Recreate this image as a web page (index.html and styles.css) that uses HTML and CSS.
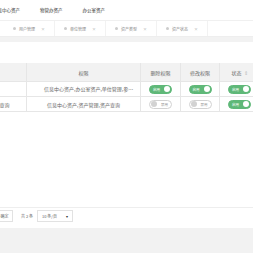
FILE: index.html
```html
<!DOCTYPE html>
<html>
<head>
    <link rel="stylesheet" href="styles.css">
</head>
<body>
    <div class="header">
        <div class="nav-item">信息中心资产</div>
        <div class="nav-item">物管办资产</div>
        <div class="nav-item">办公室资产</div>
    </div>

    <div class="tabs">
        <div class="tab"><span class="dot"></span>用户管理<span class="close">×</span></div>
        <div class="tab"><span class="dot"></span>单位管理<span class="close">×</span></div>
        <div class="tab"><span class="dot"></span>资产类型<span class="close">×</span></div>
        <div class="tab"><span class="dot"></span>资产状态<span class="close">×</span></div>
    </div>

    <div class="main">
        <div class="card">
            <div class="toolbar"></div>
            <div class="table">
                <div class="th"></div>
                <div class="th">权限</div>
                <div class="th">删除权限</div>
                <div class="th">修改权限</div>
                <div class="th">状态 <span class="sort">⇕</span></div>

                <div class="td"></div>
                <div class="td ellipsis">信息中心资产,办公室资产,单位管理,参数设置,资产管理</div>
                <div class="td"><span class="switch on"><em>启用</em><i></i></span></div>
                <div class="td"><span class="switch on"><em>启用</em><i></i></span></div>
                <div class="td"><span class="switch on"><em>启用</em><i></i></span></div>

                <div class="td">资产查询</div>
                <div class="td">信息中心资产,资产管理,资产查询</div>
                <div class="td"><span class="switch"><i></i><em>禁用</em></span></div>
                <div class="td"><span class="switch"><i></i><em>禁用</em></span></div>
                <div class="td"><span class="switch on"><em>启用</em><i></i></span></div>
            </div>
            <div class="pager">
                <span class="btn">确定</span>
                <span class="count">共 2 条</span>
                <span class="select">10 条/页 <b>▾</b></span>
            </div>
        </div>
    </div>
</body>
</html>
```

FILE: styles.css
```css
body {
    margin: 0;
    width: 253px;
    height: 253px;
    overflow: hidden;
    background: #f2f2f2;
    font-family: "Noto Sans CJK SC", "Noto Sans", sans-serif;
    color: #666;
}

.header {
    height: 20px;
    background: #fff;
    display: flex;
    align-items: center;
    margin-left: -17px;
    border-bottom: 1px solid #f0f0f0;
}

.nav-item {
    padding: 0 10px;
    font-size: 4.5px;
    color: #333;
}

.tabs {
    height: 15px;
    background: #fff;
    display: flex;
    padding-left: 4px;
    border-bottom: 1px solid #eee;
}

.tab {
    display: flex;
    align-items: center;
    gap: 3px;
    padding: 0 9px;
    font-size: 4px;
    color: #888;
    border-right: 1px solid #f2f2f2;
}

.tab .dot {
    width: 3px;
    height: 3px;
    border-radius: 50%;
    background: #ccc;
}

.tab .close {
    margin-left: 3px;
    color: #aaa;
}

.main {
    padding-top: 5px;
}

.card {
    background: #fff;
    padding-bottom: 4px;
}

.toolbar {
    height: 21px;
}

.table {
    display: grid;
    grid-template-columns: 54px 114px 40px 39px 40px;
    margin-left: -27px;
    font-size: 5px;
    height: 144px;
    align-content: start;
    border-bottom: 1px solid #eee;
}

.th, .td {
    display: flex;
    align-items: center;
    justify-content: center;
    border-right: 1px solid #e6e6e6;
    border-bottom: 1px solid #e6e6e6;
    overflow: hidden;
    white-space: nowrap;
}

.th {
    height: 18px;
    background: #f2f2f2;
}

.td {
    height: 14px;
}

.ellipsis {
    display: block;
    line-height: 14px;
    text-overflow: ellipsis;
    padding: 0 3px 0 17px;
}

.sort {
    color: #bbb;
    margin-left: 2px;
}

.switch {
    display: inline-flex;
    align-items: center;
    justify-content: space-between;
    width: 23px;
    height: 9px;
    border-radius: 5px;
    border: 1px solid #d2d2d2;
    background: #fff;
    box-sizing: border-box;
    padding: 0 1px;
    color: #999;
}

.switch em {
    font-style: normal;
    font-size: 3.5px;
    padding: 0 2px;
}

.switch i {
    width: 6px;
    height: 6px;
    border-radius: 50%;
    background: #d2d2d2;
}

.switch.on {
    background: #5fb878;
    border-color: #5fb878;
    color: #fff;
}

.switch.on i {
    background: #fff;
}

.pager {
    display: flex;
    align-items: center;
    height: 16px;
    font-size: 4px;
}

.btn, .select {
    border: 1px solid #e2e2e2;
    padding: 2px 3.5px;
}

.btn {
    margin-left: -4px;
}

.count {
    margin: 0 4px 0 8px;
}

.select {
    display: inline-flex;
    gap: 9px;
    padding: 2px 4px;
}

.select b {
    font-weight: normal;
    color: #333;
}
```
